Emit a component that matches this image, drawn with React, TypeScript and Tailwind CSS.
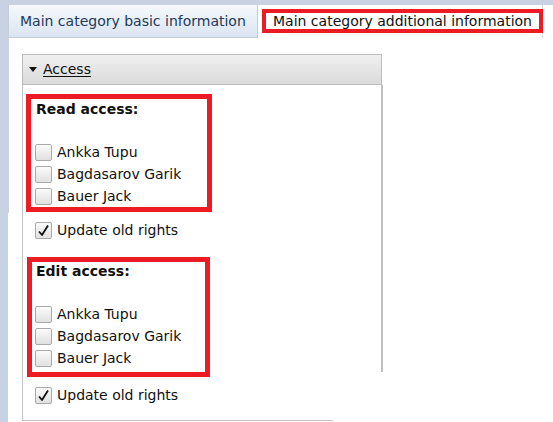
import React from "react";

const Box = ({ checked }: { checked?: boolean }) => (
  <span className="w-[17px] h-[17px] shrink-0 rounded-[2px] border border-[#a9a9a9] bg-gradient-to-b from-[#fbfbfb] to-[#e1e1e1] flex items-center justify-center">
    {checked && (
      <svg width="13" height="13" viewBox="0 0 13 13">
        <path d="M2 7.5 L5 11 L11 1.5" stroke="#111" strokeWidth="1.8" fill="none" strokeLinejoin="round" />
      </svg>
    )}
  </span>
);

const Row = ({ label, checked }: { label: string; checked?: boolean }) => (
  <div className="flex items-center gap-[5px] h-[17px] text-[#111]">
    <Box checked={checked} />
    <span className="leading-[17px]">{label}</span>
  </div>
);

const people = ["Ankka Tupu", "Bagdasarov Garik", "Bauer Jack"];

export default function App() {
  return (
    <div className="relative w-[553px] h-[422px] overflow-hidden bg-white text-[14px] [font-family:'DejaVu_Sans',sans-serif]">
      <div className="h-[5px] bg-[#c8d2e2]" />
      <div className="flex">
        <div className="w-[8px] h-[417px] shrink-0 bg-[#c8d2e2]" />
        <div className="flex-1 flex flex-col">
          {/* tabs */}
          <div className="flex h-[33px]">
            <div className="w-[250px] border-l border-r border-b border-[#c3ccd8] bg-gradient-to-b from-[#f6f9fc] to-[#dae4f1] flex items-center pl-[11px] text-[#22395b]">
              Main category basic information
            </div>
            <div className="w-[285px] border-r border-[#d4d9e0] bg-white pl-[4px] pt-[4px]">
              <div className="w-[281px] h-[24px] border-4 border-[#ed1c24] flex items-center pl-[7px] text-[#111]">
                Main category additional information
              </div>
            </div>
          </div>
          {/* panel body */}
          <div className="relative pl-[14px] pt-[16px]">
            <div className="absolute left-0 top-0 w-px h-[175px] bg-[#cdd4de]" />
            <div className="w-[360px]">
              <div className="h-[31px] border border-[#bdbdbd] bg-gradient-to-b from-[#f0f0f0] to-[#dadada] flex items-center pl-[6px] gap-[6px] text-[#111]">
                <svg width="8" height="5" viewBox="0 0 8 5">
                  <polygon points="0,0 8,0 4,5" fill="#111" />
                </svg>
                <span className="underline underline-offset-2">Access</span>
              </div>
              <div className="relative w-[311px] h-[336px] border-l border-b border-[#c4c4c4] pl-[3px] pt-[9px]">
                <div className="absolute left-[358px] top-0 w-[1.5px] h-[287px] bg-[#bfbfbf]" />
                <div className="w-[186px] h-[118px] border-[5px] border-[#ed1c24] pl-[4px]">
                  <div className="font-bold leading-[20px] ml-px text-[#111]">Read access:</div>
                  <div className="mt-[25px] flex flex-col gap-[5px]">
                    {people.map((p) => (
                      <Row key={p} label={p} />
                    ))}
                  </div>
                </div>
                <div className="mt-[10px] pl-[9px]">
                  <Row label="Update old rights" checked />
                </div>
                <div className="mt-[18px] ml-[1px] w-[183px] h-[120px] border-[5px] border-[#ed1c24] pl-[3px]">
                  <div className="font-bold leading-[20px] ml-px text-[#111] -mt-px">Edit access:</div>
                  <div className="mt-[25px] flex flex-col gap-[5px]">
                    {people.map((p) => (
                      <Row key={p} label={p} />
                    ))}
                  </div>
                </div>
                <div className="mt-[10px] pl-[9px]">
                  <Row label="Update old rights" checked />
                </div>
              </div>
            </div>
          </div>
        </div>
      </div>
    </div>
  );
}
